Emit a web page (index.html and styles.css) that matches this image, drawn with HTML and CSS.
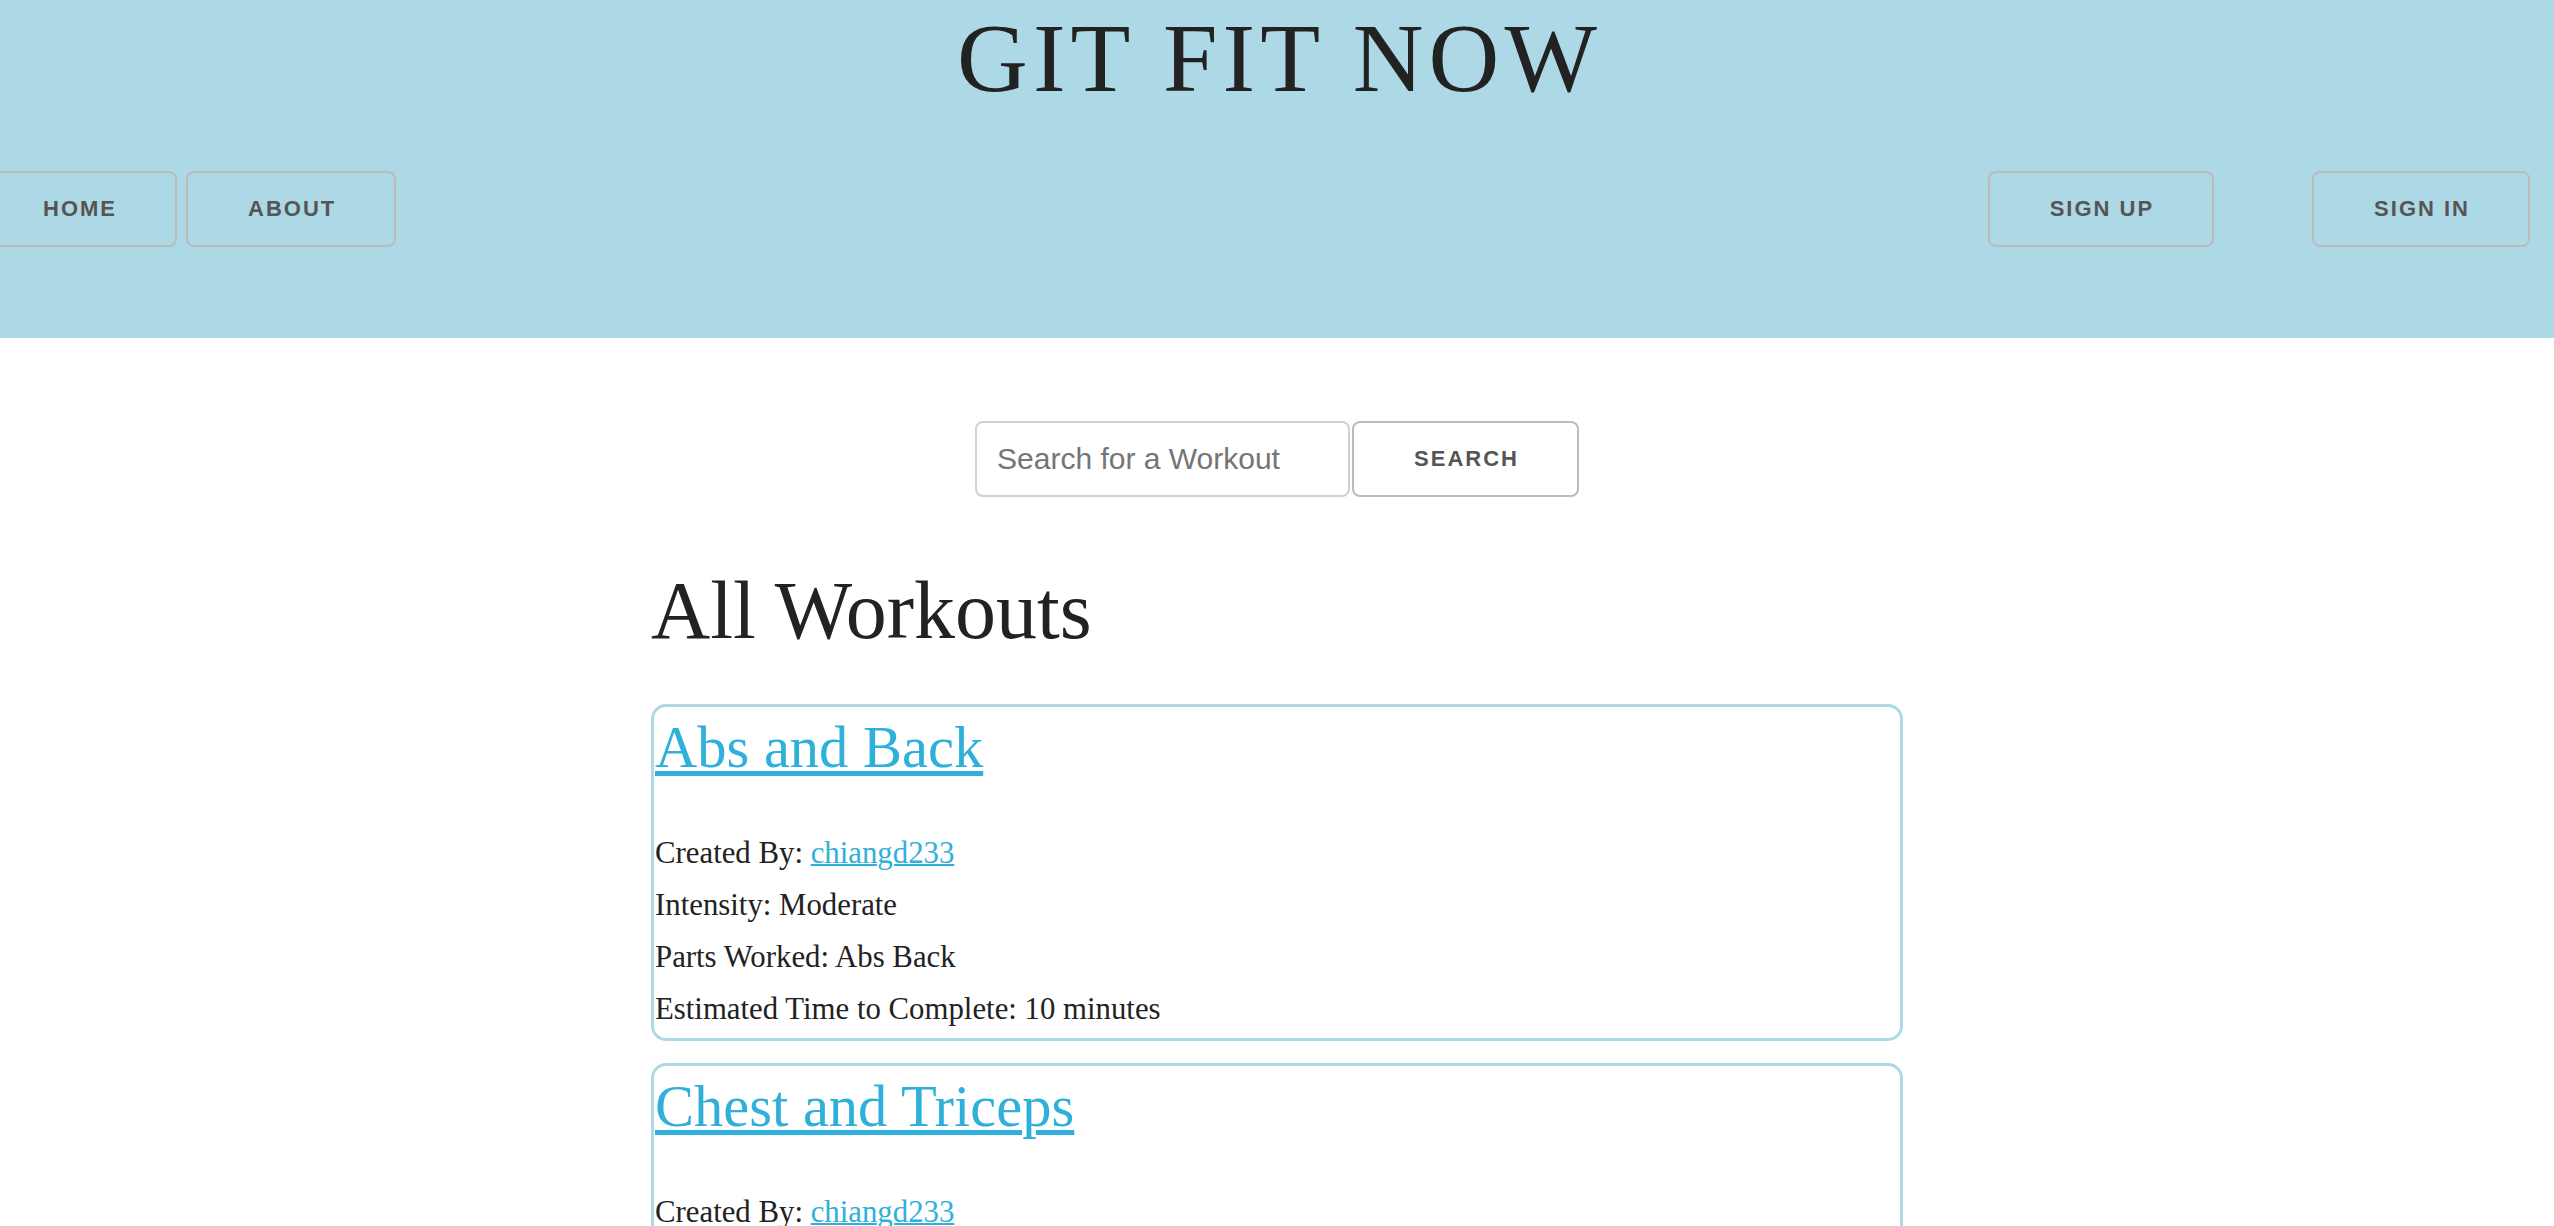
FILE: index.html
```html
<!DOCTYPE html>
<html lang="en">
<head>
<meta charset="utf-8">
<title>Git Fit Now</title>
<link rel="stylesheet" href="styles.css">
</head>
<body>
<header class="topbar">
  <h1 class="site-title">GIT FIT NOW</h1>
  <nav class="mainnav">
    <div class="nav-group nav-left">
      <a class="btn" href="#">Home</a>
      <a class="btn" href="#">About</a>
    </div>
    <div class="nav-group nav-right">
      <a class="btn" href="#">Sign Up</a>
      <a class="btn" href="#">Sign In</a>
    </div>
  </nav>
</header>
<main>
  <form class="search">
    <input class="search-input" type="text" placeholder="Search for a Workout">
    <button class="btn search-btn" type="button">Search</button>
  </form>
  <section class="container">
    <h2 class="page-title">All Workouts</h2>
    <div class="card">
      <h3 class="card-title"><a href="#">Abs and Back</a></h3>
      <p class="card-line">Created By: <a href="#">chiangd233</a></p>
      <p class="card-line">Intensity: Moderate</p>
      <p class="card-line">Parts Worked: Abs Back</p>
      <p class="card-line">Estimated Time to Complete: 10 minutes</p>
    </div>
    <div class="card">
      <h3 class="card-title"><a href="#">Chest and Triceps</a></h3>
      <p class="card-line">Created By: <a href="#">chiangd233</a></p>
      <p class="card-line">Intensity: Hard</p>
      <p class="card-line">Parts Worked: Chest Triceps</p>
      <p class="card-line">Estimated Time to Complete: 20 minutes</p>
    </div>
  </section>
</main>
</body>
</html>
```

FILE: styles.css
```css
html, body {
  margin: 0;
  padding: 0;
}

body {
  font-family: "Liberation Serif", "Times New Roman", serif;
  color: #222;
  background: #fff;
  overflow-x: hidden;
}

.topbar {
  background: #add8e6;
  height: 338px;
  overflow: hidden;
}

.site-title {
  margin: 0;
  padding-left: 5px;
  text-align: center;
  font-size: 98px;
  font-weight: 400;
  letter-spacing: 5px;
  line-height: 117px;
  color: #222;
}

.mainnav {
  display: flex;
  justify-content: space-between;
  align-items: center;
  margin-top: 54px;
}

.nav-group {
  display: flex;
}

.nav-left {
  gap: 9px;
  margin-left: -19px;
}

.nav-right {
  gap: 98px;
  margin-right: 24px;
}

.btn {
  display: inline-block;
  box-sizing: border-box;
  height: 76px;
  padding: 0 58px 0 60px;
  border: 2px solid #bbb;
  border-radius: 8px;
  background: transparent;
  color: #555;
  font-family: "Liberation Sans", Arial, sans-serif;
  font-size: 22px;
  font-weight: 700;
  letter-spacing: 2px;
  line-height: 72px;
  text-transform: uppercase;
  text-decoration: none;
  white-space: nowrap;
  cursor: pointer;
}

.search {
  display: flex;
  justify-content: center;
  gap: 2px;
  margin: 83px 0 0;
}

.search-input {
  box-sizing: border-box;
  width: 375px;
  height: 76px;
  padding: 0 20px;
  border: 2px solid #d1d1d1;
  border-radius: 8px;
  font-family: "Liberation Sans", Arial, sans-serif;
  font-size: 30px;
  color: #333;
  background: #fff;
  outline: none;
}

.search-input::placeholder {
  color: #757575;
}

.search-btn {
  background: #fff;
}

.container {
  width: 1252px;
  margin: 0 auto;
}

.page-title {
  margin: 67px 0 46px;
  font-size: 82px;
  font-weight: 400;
  line-height: normal;
  color: #222;
}

.card {
  border: 3px solid #add8e6;
  border-radius: 15px;
  padding: 6px 0 3px 1px;
  margin-bottom: 22px;
}

.card-title {
  margin: 0 0 45px;
  font-size: 58.5px;
  font-weight: 400;
  line-height: 69px;
}

.card a {
  color: #2eb0da;
  text-decoration: underline;
}

.card-title a {
  text-decoration-thickness: 5px;
  text-underline-offset: 4px;
}

.card-line {
  margin: 0;
  font-size: 30.8px;
  line-height: 52px;
}

.card-line a {
  text-decoration-thickness: 2px;
}
```
